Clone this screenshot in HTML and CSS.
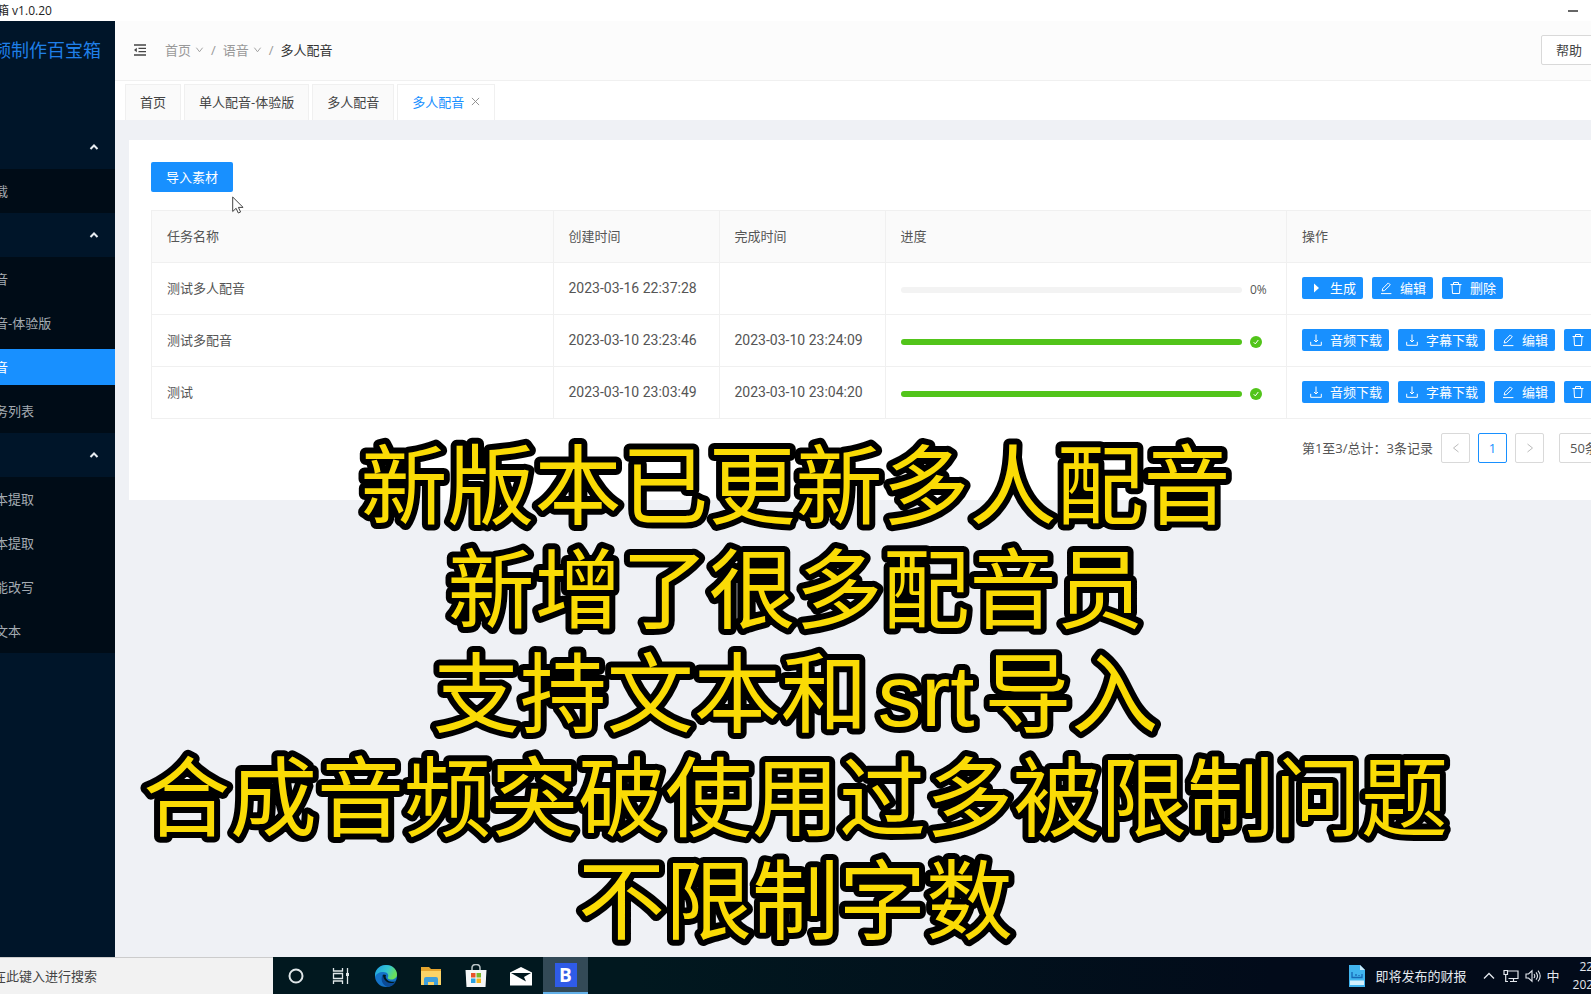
FILE: index.html
```
<!DOCTYPE html>
<html lang="zh-CN">
<head>
<meta charset="utf-8">
<title>视频制作百宝箱 v1.0.20</title>
<link rel="stylesheet" href="styles.css">
</head>
<body>
<svg class="sprite" aria-hidden="true">
  <symbol id="i-edit" viewBox="0 0 14 14"><path d="M2 12.6h10.4M3.2 10l.5-2.4 5.6-5.7 2 2-5.7 5.6z" fill="none" stroke="currentColor"/></symbol>
  <symbol id="i-trash" viewBox="0 0 14 14"><path d="M1.500 3.500h11M4.500 3.200V1.500h5v1.700M3 3.700l.5 8.800h7l.5-8.800" fill="none" stroke="currentColor"/></symbol>
  <symbol id="i-down" viewBox="0 0 14 14"><path d="M7 1.500v7.300M5 7l2 2 2-2M1.700 8.800v3.500h10.600V8.800" fill="none" stroke="currentColor"/></symbol>
  <symbol id="i-play" viewBox="0 0 14 14"><path d="M5 2.500l5 4.500-5 4.500z" fill="currentColor"/></symbol>
  <symbol id="i-up" viewBox="0 0 10 10"><path d="M1.500 7L5 3.500 8.500 7" fill="none" stroke="currentColor" stroke-width="2"/></symbol>
  <symbol id="i-chev" viewBox="0 0 10 10"><path d="M1.500 3L5 7.500 8.500 3" fill="none" stroke="currentColor"/></symbol>
  <symbol id="i-left" viewBox="0 0 10 10"><path d="M7.500 1L2.500 5l5 4" fill="none" stroke="currentColor"/></symbol>
  <symbol id="i-right" viewBox="0 0 10 10"><path d="M2.500 1l5 4-5 4" fill="none" stroke="currentColor"/></symbol>
  <symbol id="i-ok" viewBox="0 0 12 12"><circle cx="6" cy="6" r="6" fill="#52c41a"/><path d="M3.700 6.200l1.600 1.700 3-3.900" fill="none" stroke="#fff"/></symbol>
</svg>

<div class="screen">
  <div class="titlebar"><span>箱 v1.0.20</span><button class="minimize" aria-label="最小化"></button></div>

  <div class="app">
    <aside class="sidebar">
      <div class="logo">频制作百宝箱</div>
      <nav>
        <button class="group" aria-label="展开"><svg><use href="#i-up"/></svg></button>
        <ul class="sub"><li><a href="#">载</a></li></ul>
        <button class="group" aria-label="展开"><svg><use href="#i-up"/></svg></button>
        <ul class="sub">
          <li><a href="#">音</a></li>
          <li><a href="#">音-体验版</a></li>
          <li><a class="active" href="#">音</a></li>
          <li><a href="#">务列表</a></li>
        </ul>
        <button class="group" aria-label="展开"><svg><use href="#i-up"/></svg></button>
        <ul class="sub">
          <li><a href="#">本提取</a></li>
          <li><a href="#">本提取</a></li>
          <li><a href="#">能改写</a></li>
          <li><a href="#">文本</a></li>
        </ul>
      </nav>
    </aside>

    <main class="main">
      <header class="header">
        <button class="fold" aria-label="收起菜单"><svg viewBox="0 0 14 14"><path d="M1 2h12M5.500 5.300H13M5.500 8.700H13M1 12h12" fill="none" stroke="currentColor" stroke-width="1.300"/><path d="M3.800 4.700v4.600L1 7z" fill="currentColor"/></svg></button>
        <nav class="crumbs">
          <a href="#">首页<svg><use href="#i-chev"/></svg></a><i>/</i>
          <a href="#">语音<svg><use href="#i-chev"/></svg></a><i>/</i>
          <span>多人配音</span>
        </nav>
        <button class="help">帮助<svg><use href="#i-chev"/></svg></button>
      </header>

      <div class="tabs">
        <button class="tab">首页</button>
        <button class="tab">单人配音-体验版</button>
        <button class="tab">多人配音</button>
        <button class="tab current">多人配音<svg viewBox="0 0 10 10"><path d="M1 1l8 8M9 1L1 9" fill="none" stroke="#888"/></svg></button>
      </div>

      <section class="card">
        <button class="import">导入素材</button>
        <table>
          <colgroup><col><col class="c-time"><col class="c-time"><col><col class="c-ops"></colgroup>
          <thead><tr><th>任务名称</th><th>创建时间</th><th>完成时间</th><th>进度</th><th>操作</th></tr></thead>
          <tbody>
            <tr><td>测试多人配音</td><td class="time">2023-03-16 22:37:28</td><td></td>
              <td><div class="progress"><div class="track"></div><span>0%</span></div></td>
              <td><div class="ops"><button><svg><use href="#i-play"/></svg>生成</button><button><svg><use href="#i-edit"/></svg>编辑</button><button><svg><use href="#i-trash"/></svg>删除</button></div></td></tr>
            <tr><td>测试多配音</td><td class="time">2023-03-10 23:23:46</td><td class="time">2023-03-10 23:24:09</td>
              <td><div class="progress"><div class="track done"></div><span><svg><use href="#i-ok"/></svg></span></div></td>
              <td><div class="ops"><button><svg><use href="#i-down"/></svg>音频下载</button><button><svg><use href="#i-down"/></svg>字幕下载</button><button><svg><use href="#i-edit"/></svg>编辑</button><button><svg><use href="#i-trash"/></svg>删除</button></div></td></tr>
            <tr><td>测试</td><td class="time">2023-03-10 23:03:49</td><td class="time">2023-03-10 23:04:20</td>
              <td><div class="progress"><div class="track done"></div><span><svg><use href="#i-ok"/></svg></span></div></td>
              <td><div class="ops"><button><svg><use href="#i-down"/></svg>音频下载</button><button><svg><use href="#i-down"/></svg>字幕下载</button><button><svg><use href="#i-edit"/></svg>编辑</button><button><svg><use href="#i-trash"/></svg>删除</button></div></td></tr>
          </tbody>
        </table>
        <div class="pager">
          <span>第1至3/总计：3条记录</span>
          <button aria-label="上一页"><svg><use href="#i-left"/></svg></button>
          <button class="on">1</button>
          <button aria-label="下一页"><svg><use href="#i-right"/></svg></button>
          <select aria-label="每页条数"><option>50条/页</option></select>
        </div>
      </section>
    </main>
  </div>

  <footer class="taskbar">
    <input class="search" type="text" aria-label="搜索" value="在此键入进行搜索">
    <div class="pins">
      <button aria-label="Cortana"><svg viewBox="0 0 24 24"><circle cx="12" cy="12" r="6.500" fill="none" stroke="#dfe6e8" stroke-width="2"/></svg></button>
      <button aria-label="任务视图"><svg viewBox="0 0 24 24"><path d="M4.500 4v3h9V4M4.500 20v-3h9v3M4.500 9.500h9v5h-9zM18.500 4v5M18.500 12v8" fill="none" stroke="#dfe6e8" stroke-width="1.300"/><path d="M17 9h3v3h-3z" fill="#dfe6e8"/></svg></button>
      <button aria-label="Edge"><svg viewBox="0 0 24 24"><defs><linearGradient id="eg" x1="0" y1="0" x2="1" y2=".4"><stop offset="0" stop-color="#1b9de2"/><stop offset=".6" stop-color="#35c6d0"/><stop offset="1" stop-color="#6ae05a"/></linearGradient></defs><circle cx="12" cy="12" r="11" fill="#1473c8"/><path d="M1 12C1 5 6 1 12 1c7 0 11 5 11 9.500 0 3.500-3 5-5.500 5-3 0-4.500-1-3.500-2.500 1-2-.5-5-4.500-5C5 8 2 10 1 13z" fill="url(#eg)"/><path d="M9.500 10.500c-3 3-1 8.500 4 9.500 4 .5 6.500-1 8-2.500-2 .6-5 .6-7.500-1C12 15 11 13 12 11z" fill="#01181f"/><path d="M9 10.500c-3 4-1 11 5 12.400 4-.7 6-2.400 7.500-5-3 1.500-6 1.600-8.500.1C10 16 9 13 9 10.500z" fill="#0b4a96"/></svg></button>
      <button aria-label="文件资源管理器"><svg viewBox="0 0 24 24"><path d="M2 3h8l2 2h10v16H2z" fill="#e5a52f"/><path d="M2 7h20v14H2z" fill="#fbd367"/><path d="M5 21v-6q0-2 2-2h10q2 0 2 2v6h-4v-3H9v3z" fill="#3f9fdb"/></svg></button>
      <button aria-label="应用商店"><svg viewBox="0 0 24 24"><path d="M8 6V4q0-3.500 4-3.500T16 4v2" fill="none" stroke="#b9c3c6" stroke-width="1.500"/><path d="M1.500 6h21l-1 17h-19z" fill="#f5f7f7"/><path d="M7 9h4.500v4.500H7z" fill="#e8532b"/><path d="M12.500 9H17v4.500h-4.500z" fill="#7cb92c"/><path d="M7 14.500h4.500V19H7z" fill="#2aa2e2"/><path d="M12.500 14.500H17V19h-4.500z" fill="#f6b51e"/></svg></button>
      <button aria-label="邮件"><svg viewBox="0 0 24 24"><path d="M1 8.500L12 3l11 5.500V21.500H1z" fill="#fff"/><path d="M2 9h20l-7 4 2 4.500z" fill="#01181f"/></svg></button>
      <button class="open" aria-label="百宝箱"><span>B</span></button>
    </div>
    <div class="tray">
      <button class="news"><svg class="doc" viewBox="0 0 18 22"><path d="M1 0h11l5 5v17H1z" fill="#41b4ee"/><path d="M12 0l5 5h-5z" fill="#c9ecfb"/><path d="M4 7v5.500h10V9M8 11V9M11 11v-1" fill="none" stroke="#1668b5" stroke-width="1.300"/><path d="M2 15.500h14V20H2z" fill="#d4f0fc"/></svg>即将发布的财报</button>
      <svg class="t-up" viewBox="0 0 12 12"><path d="M1 8.500L6 3.500l5 5" fill="none" stroke="#e4e8ee" stroke-width="1.300"/></svg>
      <svg class="t-net" viewBox="0 0 16 14"><path d="M4.500 2H15v7.500H5.500M7 12.500h7M10.500 9.500v3M1 1.500h3.500v4H1zM2.700 5.500v7H5" fill="none" stroke="#e4e8ee" stroke-width="1.200"/></svg>
      <svg class="t-net" viewBox="0 0 16 14"><path d="M1 5h2.500L7 1.800v10.400L3.500 9H1zM9 5q1.500 2 0 4M11 3.300q3 3.700 0 7.400M13 1.600q4.400 5.400 0 10.800" fill="none" stroke="#e4e8ee" stroke-width="1.100"/></svg>
      <span class="ime">中</span>
      <div class="clock"><span>22</span><span>2023</span></div>
    </div>
  </footer>

  <svg class="cursor" viewBox="0 0 12 18"><path d="M.7 1v14.500l3.400-3.200L6.300 17l2.300-1-2.200-4.600h4.700z" fill="#fff" stroke="#444"/></svg>

  <svg class="caption">
    <text x="50%" y="88">新版本已更新多人配音</text>
    <text x="50%" y="192">新增了很多配音员</text>
    <text x="50%" y="296">支持文本和<tspan class="latin" dx="10">srt</tspan><tspan dx="10">导入</tspan></text>
    <text x="50%" y="400">合成音频突破使用过多被限制问题</text>
    <text x="50%" y="503">不限制字数</text>
  </svg>
</div>
</body>
</html>
```
FILE: styles.css
```
* { box-sizing: border-box; }
body, p, ul { margin: 0; padding: 0; }
body {
  font: 13px/20px "Open Sans", "Noto Sans CJK SC", sans-serif;
  color: #555;
  background: #eff1f5;
}
button, input, select { font: inherit; color: inherit; margin: 0; padding: 0; border: 0; background: none; }
a { color: inherit; text-decoration: none; }
ul { list-style: none; }
svg { display: block; flex: none; }
.sprite { position: absolute; width: 0; height: 0; }

.screen {
  position: relative;
  display: flex;
  flex-direction: column;
  height: 100vh;
  overflow: hidden;
}

.titlebar {
  flex: none;
  display: flex;
  justify-content: space-between;
  align-items: center;
  height: 21px;
  padding-right: 13px;
  margin-left: -3px;
  font-size: 12px;
  color: #222;
  background: #fff;
}
.minimize { width: 10px; height: 2px; background: #666; }

.app { flex: 1; display: flex; min-height: 0; }

/* sidebar */
.sidebar {
  flex: none;
  width: 115px;
  overflow: hidden;
  color: #a4abb2;
  background: #001529;
}
.logo {
  display: flex;
  justify-content: flex-end;
  align-items: center;
  height: 58px;
  margin-bottom: 46px;
  padding-right: 14px;
  font-size: 18px;
  white-space: nowrap;
  color: #1f7fe8;
}
.group {
  display: flex;
  justify-content: flex-end;
  align-items: center;
  width: 100%;
  height: 44px;
  padding-right: 16px;
  color: #e8edf2;
}
.group svg { width: 10px; height: 10px; }
.sub { background: #000c17; padding: 4px 0; }
.sub li + li { margin-top: 8px; }
.sub a {
  display: block;
  margin-left: -5px;
  line-height: 36px;
  white-space: nowrap;
}
.sub a.active { color: #fff; background: #1890ff; }

/* header */
.main { flex: 1; min-width: 0; overflow: hidden; }
.header {
  display: flex;
  align-items: center;
  height: 60px;
  padding: 0 0 2px 18px;
  border-bottom: 1px solid #f0f0f0;
  background: #fcfcfc;
}
.fold { color: #444; }
.fold svg { width: 14px; height: 14px; }
.crumbs { display: flex; align-items: center; margin-left: 18px; color: #999; }
.crumbs a { display: flex; align-items: center; gap: 4px; }
.crumbs svg { width: 9px; height: 9px; }
.crumbs i { margin: 0 7px; font-style: normal; }
.crumbs span { color: #333; }
.help {
  display: flex;
  align-items: center;
  gap: 8px;
  height: 30px;
  margin: 0 -24px 0 auto;
  padding: 0 14px;
  border: 1px solid #d9d9d9;
  border-radius: 2px;
  color: #444;
  background: #fff;
}
.help svg { width: 10px; height: 10px; }

.tabs {
  display: flex;
  align-items: flex-end;
  gap: 3px;
  height: 39px;
  padding-left: 10px;
  background: #fff;
}
.tab {
  display: flex;
  align-items: center;
  gap: 7px;
  height: 36px;
  padding: 0 14px 2px;
  border: 1px solid #f0f0f0;
  border-bottom: 0;
  color: #444;
  background: #fafafa;
}
.tab.current { color: #1890ff; background: #fff; }
.tab svg { width: 9px; height: 9px; }

/* content; the table runs past the right window edge */
.card {
  width: calc(100% + 64px);
  min-height: 360px;
  margin: 20px 0 0 14px;
  padding: 22px 22px 28px;
  background: #fff;
}
.import {
  height: 30px;
  padding: 0 15px;
  border-radius: 2px;
  color: #fff;
  background: #1890ff;
}
table {
  width: 100%;
  margin-top: 18px;
  table-layout: fixed;
  border-collapse: collapse;
}
th, td {
  height: 52px;
  padding: 0 15px 2px;
  border: 1px solid #f0f0f0;
  text-align: left;
  white-space: nowrap;
}
th { font-weight: 400; background: #fafafa; }
.time { font-family: Roboto, sans-serif; font-size: 14px; }
.c-time { width: 166px; }
.c-ops { width: 360px; }
.progress { display: flex; align-items: center; gap: 8px; padding-top: 5px; font-size: 12px; }
.progress span { width: 21px; }
.progress svg { width: 12px; height: 12px; }
.track { flex: 1; height: 6px; border-radius: 3px; background: #f3f3f3; }
.track.done { background: #52c41a; }
.ops { display: flex; gap: 9px; }
.ops button {
  display: flex;
  align-items: center;
  gap: 7px;
  height: 22px;
  padding: 0 7px;
  border-radius: 2px;
  color: #fff;
  background: #1890ff;
}
.ops svg { width: 14px; height: 14px; }

.pager { display: flex; justify-content: flex-end; align-items: center; gap: 8px; margin-top: 14px; }
.pager button {
  display: grid;
  place-items: center;
  width: 29px;
  height: 30px;
  border: 1px solid #d9d9d9;
  border-radius: 2px;
  color: #bbb;
}
.pager button.on { color: #1890ff; border-color: #1890ff; }
.pager svg { width: 10px; height: 10px; }
.pager select {
  width: 88px;
  height: 30px;
  margin-left: 7px;
  padding-left: 10px;
  appearance: none;
  border: 1px solid #d9d9d9;
  border-radius: 2px;
}

/* taskbar */
.taskbar {
  flex: none;
  display: flex;
  height: 37px;
  background: linear-gradient(90deg, #01181f 40%, #020b1a 80%);
}
.search {
  width: 273px;
  text-indent: -7px;
  border-top: 1px solid #ccc;
  color: #444;
  background: #f2f2f2;
}
.pins { display: flex; }
.pins button { display: grid; place-items: center; width: 45px; }
.pins svg { width: 24px; height: 24px; }
.pins .open { background: #334a57; border-bottom: 2px solid #62b0e8; }
.open span {
  width: 22px;
  font-size: 19px;
  line-height: 24px;
  font-weight: 700;
  color: #fff;
  background: #2f5be6;
}
.tray { display: flex; align-items: center; margin: 0 -9px 0 auto; color: #e4e8ee; }
.news { display: flex; align-items: center; gap: 10px; }
.doc { width: 18px; height: 22px; }
.t-up { width: 12px; height: 12px; margin: 0 8px 0 16px; }
.t-net { width: 16px; height: 14px; margin-right: 6px; }
.ime { margin-right: 13px; }
.clock { display: flex; flex-direction: column; align-items: center; font-size: 12px; line-height: 18px; }

.cursor { position: absolute; left: 232px; top: 196px; width: 12px; height: 18px; }

/* outlined caption over the whole screen */
.caption {
  position: absolute;
  left: 0;
  top: 430px;
  width: 100%;
  height: 530px;
  pointer-events: none;
  text-anchor: middle;
  font: 87px "Noto Sans CJK SC", sans-serif;
  fill: #fadb05;
  stroke: #000;
  stroke-width: 12px;
  stroke-linejoin: round;
  paint-order: stroke fill;
}
.latin { font-family: "Liberation Sans", sans-serif; }
```
